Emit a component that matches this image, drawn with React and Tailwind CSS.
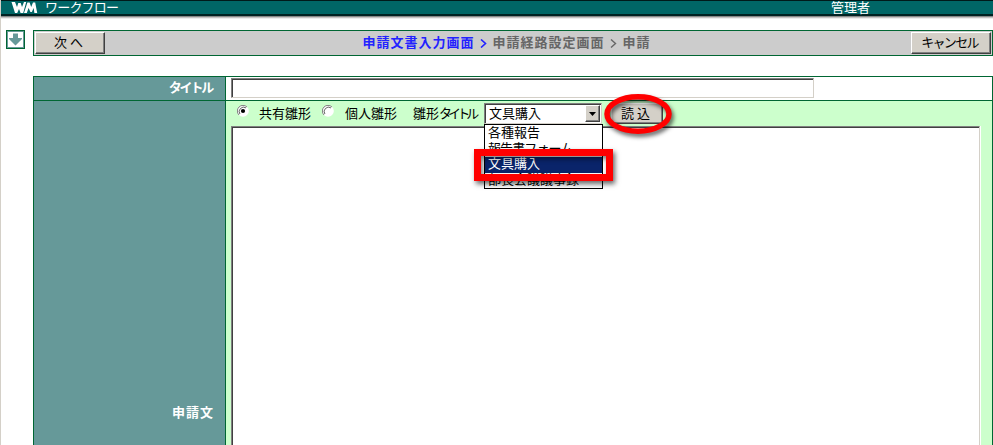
const raised =
  'flex items-center justify-center bg-[#d4d0c8] border border-t-white border-l-white border-b-[#404040] border-r-[#404040] shadow-[inset_-1px_-1px_0_#808080] whitespace-nowrap';
const sunken =
  'bg-white border border-t-[#808080] border-l-[#808080] border-b-[#d4d0c8] border-r-[#d4d0c8] shadow-[inset_1px_1px_0_#404040]';

function Radio({ checked }) {
  return (
    <svg width="12" height="12" viewBox="0 0 12 12" className="block shrink-0">
      <circle cx="6" cy="6" r="5.8" fill="#fff" />
      <path d="M2 10A5.4 5.4 0 0 1 10 2" fill="none" stroke="#808080" strokeWidth="1" />
      <path d="M2.9 9A4.4 4.4 0 0 1 9 2.9" fill="none" stroke="#404040" strokeWidth="0.8" />
      {checked && <circle cx="6" cy="6" r="2.1" fill="#000" />}
    </svg>
  );
}

function Header() {
  return (
    <header className="relative z-10 flex h-[16px] shrink-0 items-start border-b-2 border-t border-b-[#002222] border-t-[#001a1a] bg-[#006666] text-white shadow-[0_1px_0_#888,0_2px_0_#c4c4c4,0_3px_0_#ececec]">
      <svg width="27" height="13" viewBox="0 0 27 13" className="ml-[10px] block shrink-0">
        <path d="M0.5 1H4L6 6L7.3 2H9.7L11 6L13 1H15.2L12.2 12H9.6L8 8L6.2 12H4Z" fill="#fff" />
        <path d="M13 12L16.4 1.5H18.6L20.2 6L22 1.5H24.2L26.2 12H23.4L22.6 7L20.9 11H19.4L17.6 7L15.8 12Z" fill="#fff" />
      </svg>
      <span className="ml-[7px] w-[786px] text-[13px] leading-[14px] tracking-[-0.8px]">ワークフロー</span>
      <span className="text-[13px] leading-[14px]">管理者</span>
    </header>
  );
}

function Toolbar() {
  return (
    <div className="flex items-start pl-[6px]">
      <div className="flex h-[19px] w-[19px] shrink-0 items-center justify-center border border-[#006633] shadow-[inset_0_0_0_1px_#669999]">
        <svg width="13" height="13" viewBox="0 0 13 13">
          <path d="M4 0.5H9V5H13V6L6.5 12.5L0 6V5H4Z" fill="#669999" />
        </svg>
      </div>
      <div className="ml-[8px] flex h-[26px] w-[960px] shrink-0 items-start justify-between border border-[#006633] bg-[#cccccc] p-px">
        <div className={raised + ' h-[22px] w-[70px] pb-[2px] text-[13px]'}>
          <span className="tracking-[3px]">次へ</span>
        </div>
        <div className="ml-[10px] flex h-[22px] w-[301px] items-center whitespace-nowrap pb-[2px] text-[13px] font-bold tracking-[1px] text-[#666666]">
          <span className="w-[117px] shrink-0 text-[#2222ff]">申請文書入力画面</span>
          <svg width="7" height="9" viewBox="0 0 7 9" className="mt-[2px] block shrink-0">
            <path d="M1 0.5L5.5 4.5L1 8.5" fill="none" stroke="#2222ff" strokeWidth="1.6" />
          </svg>
          <span className="ml-[6px] w-[117px] shrink-0">申請経路設定画面</span>
          <svg width="7" height="9" viewBox="0 0 7 9" className="mt-[2px] block shrink-0">
            <path d="M1 0.5L5.5 4.5L1 8.5" fill="none" stroke="#666666" strokeWidth="1.4" />
          </svg>
          <span className="ml-[6px] shrink-0">申請</span>
        </div>
        <div className={raised + ' h-[22px] w-[80px] pb-[2px] pr-[3px] text-[13px]'}>
          <span className="tracking-[-1.7px]">キャンセル</span>
        </div>
      </div>
    </div>
  );
}

function TemplateSelect() {
  return (
    <div className="relative ml-[6px] shrink-0">
      <div className={sunken + ' flex h-[21px] w-[118px] items-center justify-between pl-[4px] pr-px'}>
        <span className="pb-px">文具購入</span>
        <div className={raised + ' h-[17px] w-[15px]'}>
          <svg width="7" height="4" viewBox="0 0 7 4">
            <path d="M0 0H7L3.5 4Z" fill="#000" />
          </svg>
        </div>
      </div>
      <div className="absolute left-0 top-[21px] z-20 h-[65px] w-[119px] overflow-hidden border border-black bg-white text-[13px] leading-[16px]">
        <div className="h-[16px] pl-[3px]">各種報告</div>
        <div className="h-[16px] pl-[3px] leading-[15px] tracking-[-0.9px]">報告書フォーム</div>
        <div className="h-[16px] bg-[#0a246a] pl-[3px] leading-[14px] text-white">文具購入</div>
        <div className="h-[16px] pl-[3px] leading-[14px]">部長会議議事録</div>
      </div>
      <div className="absolute left-[-10px] top-[46px] z-30 h-[32px] w-[139px] border-[7px] border-[#ff0000] shadow-[2px_3px_5px_rgba(0,0,0,0.6),inset_2px_3px_5px_rgba(0,0,0,0.5)]" />
    </div>
  );
}

function LoadButton() {
  return (
    <div className="relative ml-[9px] shrink-0">
      <div className={raised + ' h-[21px] w-[52px] pb-px'}>
        <span className="tracking-[3px]">読込</span>
      </div>
      <svg
        width="80"
        height="52"
        viewBox="0 0 80 52"
        className="absolute left-[-13px] top-[-15px] z-30 drop-shadow-[2px_3px_2px_rgba(0,0,0,0.6)]"
      >
        <ellipse cx="40" cy="26" rx="31" ry="17.2" fill="none" stroke="#ff0000" strokeWidth="5.5" />
      </svg>
    </div>
  );
}

function FormTable() {
  return (
    <div className="ml-[33px] mt-[20px] flex w-[960px] flex-1 flex-col border-x border-t border-[#006633]">
      <div className="flex h-[24px] shrink-0 border-b border-[#006633]">
        <div className="flex w-[191px] items-center justify-end bg-[#669999] pb-[2px] pr-[13px] text-[13px] font-bold text-white">
          <span className="tracking-[-2.2px]">タイトル</span>
        </div>
        <div className="flex flex-1 border-l border-[#006633] bg-white pl-[5px] pt-px">
          <div className={sunken + ' h-[20px] w-[583px]'} />
        </div>
      </div>
      <div className="flex flex-1">
        <div className="flex w-[191px] items-start justify-end bg-[#669999] pr-[11px] pt-[302px] text-[13px] font-bold leading-[19px] text-white">
          <span className="tracking-[1px]">申請文</span>
        </div>
        <div className="flex flex-1 flex-col border-l border-[#006633] bg-[#ccffcc] pl-[5px]">
          <div className="flex h-[25px] shrink-0 items-center whitespace-nowrap pl-[6px] text-[13px]">
            <div className="w-[22px] pb-[5px]">
              <Radio checked />
            </div>
            <span className="w-[63px] pb-px">共有雛形</span>
            <div className="w-[23px] pb-[5px]">
              <Radio />
            </div>
            <span className="w-[68px] pb-px">個人雛形</span>
            <span className="w-[65px] pb-px">
              雛形<span className="tracking-[-3.9px]">タイトル</span>
            </span>
            <TemplateSelect />
            <LoadButton />
          </div>
          <div className="w-[749px] flex-1 border-l border-r border-t border-l-[#808080] border-r-[#d4d0c8] border-t-[#808080] bg-white shadow-[inset_1px_1px_0_#404040,1px_0_0_#fff]" />
        </div>
      </div>
    </div>
  );
}

export default function App() {
  return (
    <div className="flex h-[445px] w-[993px] flex-col overflow-hidden border-l border-[#d4d0c8] bg-white font-['Liberation_Sans','Noto_Sans_CJK_JP',sans-serif] leading-none text-black">
      <Header />
      <div className="-ml-px mt-[14px] flex flex-1 flex-col">
        <Toolbar />
        <FormTable />
      </div>
    </div>
  );
}
